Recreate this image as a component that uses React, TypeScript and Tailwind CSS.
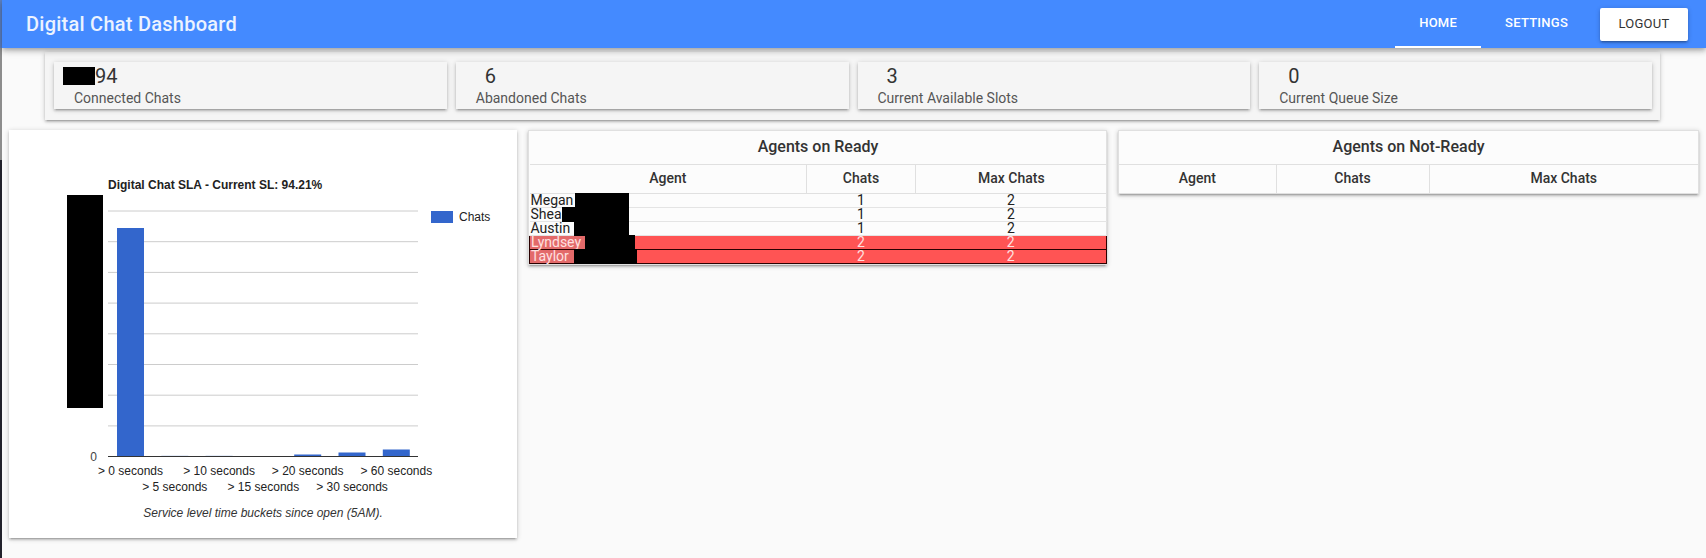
import React from "react";

const cardShadow =
  "shadow-[0_2px_2px_0_rgba(0,0,0,0.14),0_3px_1px_-2px_rgba(0,0,0,0.12),0_1px_5px_0_rgba(0,0,0,0.2)]";

type Row = {
  name: string;
  chats: number;
  max: number;
  red?: boolean;
  boxLeft: number;
  boxW: number;
};

const readyRows: Row[] = [
  { name: "Megan", chats: 1, max: 2, boxLeft: 45, boxW: 54 },
  { name: "Shea", chats: 1, max: 2, boxLeft: 32, boxW: 67 },
  { name: "Austin", chats: 1, max: 2, boxLeft: 44, boxW: 55 },
  { name: "Lyndsey", chats: 2, max: 2, red: true, boxLeft: 55, boxW: 50 },
  { name: "Taylor", chats: 2, max: 2, red: true, boxLeft: 44, boxW: 63 },
];

function StatCard({ num, label, redact }: { num: string; label: string; redact?: boolean }) {
  return (
    <div className={`flex-1 h-[47px] bg-[#f5f5f5] pt-[2px] ${cardShadow}`}>
      <div className={`flex items-center text-[20px] leading-[24px] text-[#333] ${redact ? "pl-[9px]" : "pl-[29px]"}`}>
        {redact && <span className="inline-block w-[32px] h-[18px] bg-black" />}
        <span>{num}</span>
      </div>
      <div className="mt-[2px] pl-[20px] text-[14px] leading-[16px] text-[#555]">{label}</div>
    </div>
  );
}

function Chart() {
  const grid = Array.from({ length: 8 }, (_, i) => 81 + i * 30.7);
  const base = 326.5;
  const bars = [
    { h: 228.5, label: "> 0 seconds" },
    { h: 1, label: "> 5 seconds", faint: true },
    { h: 1, label: "> 10 seconds", faint: true },
    { h: 0, label: "> 15 seconds" },
    { h: 2, label: "> 20 seconds" },
    { h: 4, label: "> 30 seconds" },
    { h: 7, label: "> 60 seconds" },
  ];
  return (
    <svg width="508" height="376" className="block font-['Liberation_Sans',Arial,sans-serif]">
      <text x="99" y="59" fontSize="12" fontWeight="bold" fill="#222">
        Digital Chat SLA - Current SL: 94.21%
      </text>
      {grid.map((y, i) => (
        <line key={i} x1="99" x2="409" y1={y} y2={y} stroke="#ccc" strokeWidth="1" />
      ))}
      {bars.map((b, i) => {
        const x = 108 + i * 44.3;
        return (
          <rect
            key={i}
            x={x}
            y={base - b.h}
            width="27"
            height={b.h}
            fill="#3366cc"
            opacity={b.faint ? 0.25 : 1}
          />
        );
      })}
      <line x1="99" x2="409" y1={base} y2={base} stroke="#333" strokeWidth="1" />
      <rect x="58" y="65" width="36" height="213" fill="#000" />
      <text x="88" y="331" fontSize="12" fill="#444" textAnchor="end">
        0
      </text>
      {bars.map((b, i) => {
        const cx = 108 + i * 44.3 + 13.5;
        return (
          <text key={i} x={cx} y={i % 2 === 0 ? 345 : 361} fontSize="12" fill="#222" textAnchor="middle">
            {b.label}
          </text>
        );
      })}
      <rect x="422" y="81" width="22" height="12" fill="#3366cc" />
      <text x="450" y="91" fontSize="12" fill="#222">
        Chats
      </text>
    </svg>
  );
}

function ReadyTable() {
  return (
    <div className={`w-[579px] self-start bg-[#fcfcfc] border border-[#e0e0e0] ${cardShadow}`}>
      <table className="w-full table-fixed border-collapse">
        <colgroup>
          <col className="w-[277px]" />
          <col className="w-[109px]" />
          <col className="w-[191px]" />
        </colgroup>
        <thead>
          <tr className="h-[33px]">
            <th colSpan={3} className="text-[16px] font-medium text-[#333] border-b border-[#e0e0e0]">
              Agents on Ready
            </th>
          </tr>
          <tr className="h-[29px]">
            <th className="text-[14px] font-medium text-[#333] border-r border-b border-[#e0e0e0]">Agent</th>
            <th className="text-[14px] font-medium text-[#333] border-r border-b border-[#e0e0e0]">Chats</th>
            <th className="text-[14px] font-medium text-[#333] border-b border-[#e0e0e0]">Max Chats</th>
          </tr>
        </thead>
        <tbody>
          {readyRows.map((r, i) => {
            const cellBase = r.red
              ? "bg-[#ff5454] text-[#ffe0e0] border-y border-[#2a0000]"
              : "text-[#222] border-b border-[#e4e4e4]";
            return (
              <tr key={i} className="h-[14px]">
                <td className={`relative p-0 pl-[1px] text-[14px] leading-[13px] ${cellBase} ${r.red ? "border-l" : ""}`}>
                  {r.red && (
                    <span className="absolute left-0 top-0 bottom-0 bg-[#e36a6a]" style={{ width: r.boxLeft }} />
                  )}
                  <span className="relative">{r.name}</span>
                  <span
                    className="absolute top-[-1px] bottom-[-1px] bg-black"
                    style={{ left: r.boxLeft, width: r.boxW }}
                  />
                </td>
                <td className={`p-0 text-center text-[14px] leading-[13px] ${cellBase}`}>{r.chats}</td>
                <td className={`p-0 text-center text-[14px] leading-[13px] ${cellBase} ${r.red ? "border-r" : ""}`}>
                  {r.max}
                </td>
              </tr>
            );
          })}
        </tbody>
      </table>
    </div>
  );
}

function NotReadyTable() {
  return (
    <div className={`w-[581px] self-start bg-[#fcfcfc] border border-[#e0e0e0] ${cardShadow}`}>
      <table className="w-full table-fixed border-collapse">
        <colgroup>
          <col className="w-[157px]" />
          <col className="w-[153px]" />
          <col className="w-[269px]" />
        </colgroup>
        <thead>
          <tr className="h-[33px]">
            <th colSpan={3} className="text-[16px] font-medium text-[#333] border-b border-[#e0e0e0]">
              Agents on Not-Ready
            </th>
          </tr>
          <tr className="h-[29px]">
            <th className="text-[14px] font-medium text-[#333] border-r border-[#e0e0e0]">Agent</th>
            <th className="text-[14px] font-medium text-[#333] border-r border-[#e0e0e0]">Chats</th>
            <th className="text-[14px] font-medium text-[#333]">Max Chats</th>
          </tr>
        </thead>
      </table>
    </div>
  );
}

export default function App() {
  return (
    <div className="flex w-[1706px] h-[558px] overflow-hidden bg-[#fafafa] font-['Roboto','Liberation_Sans',sans-serif]">
      <div className="w-[2px] flex flex-col shrink-0">
        <div className="h-[48px] bg-[#5b7fc0]" />
        <div className="h-[112px] bg-[#8d8d8d]" />
        <div className="flex-1 bg-[#23232d]" />
      </div>
      <div className="flex-1 flex flex-col">
        <header className="relative z-10 h-[48px] shrink-0 flex items-center bg-[#448aff] shadow-[0_2px_4px_-1px_rgba(0,0,0,0.2),0_4px_5px_0_rgba(0,0,0,0.14),0_1px_10px_0_rgba(0,0,0,0.12)]">
          <div className="pl-[24px] text-[20px] font-medium tracking-[0.25px] text-white/90">Digital Chat Dashboard</div>
          <nav className="ml-auto h-full flex items-center pr-[18px]">
            <div className="h-full flex items-center px-[24px] border-b-2 border-white text-[13px] tracking-[0.25px] font-medium text-white">
              HOME
            </div>
            <div className="h-full flex items-center px-[24px] border-b-2 border-transparent text-[13px] tracking-[0.25px] font-medium text-white">
              SETTINGS
            </div>
            <button className="ml-[8px] w-[88px] h-[33px] bg-white rounded-[2px] text-[13px] tracking-[0.25px] font-normal text-[#333] shadow-[0_2px_2px_0_rgba(0,0,0,0.14),0_3px_1px_-2px_rgba(0,0,0,0.12),0_1px_5px_0_rgba(0,0,0,0.2)]">
              LOGOUT
            </button>
          </nav>
        </header>

        <section className={`mt-[4px] ml-[43px] w-[1615px] h-[68px] bg-[#f5f5f5] flex gap-[9px] pl-[9px] pr-[8px] pt-[10px] ${cardShadow}`}>
          <StatCard num="94" label="Connected Chats" redact />
          <StatCard num="6" label="Abandoned Chats" />
          <StatCard num="3" label="Current Available Slots" />
          <StatCard num="0" label="Current Queue Size" />
        </section>

        <main className="mt-[10px] ml-[7px] flex gap-[11px] items-start">
          <div className={`w-[508px] h-[408px] bg-white ${cardShadow}`}>
            <Chart />
            <p className="text-center text-[12px] leading-[14px] italic text-[#333] font-['Liberation_Sans',Arial,sans-serif]">
              Service level time buckets since open (5AM).
            </p>
          </div>
          <ReadyTable />
          <NotReadyTable />
        </main>
      </div>
    </div>
  );
}
